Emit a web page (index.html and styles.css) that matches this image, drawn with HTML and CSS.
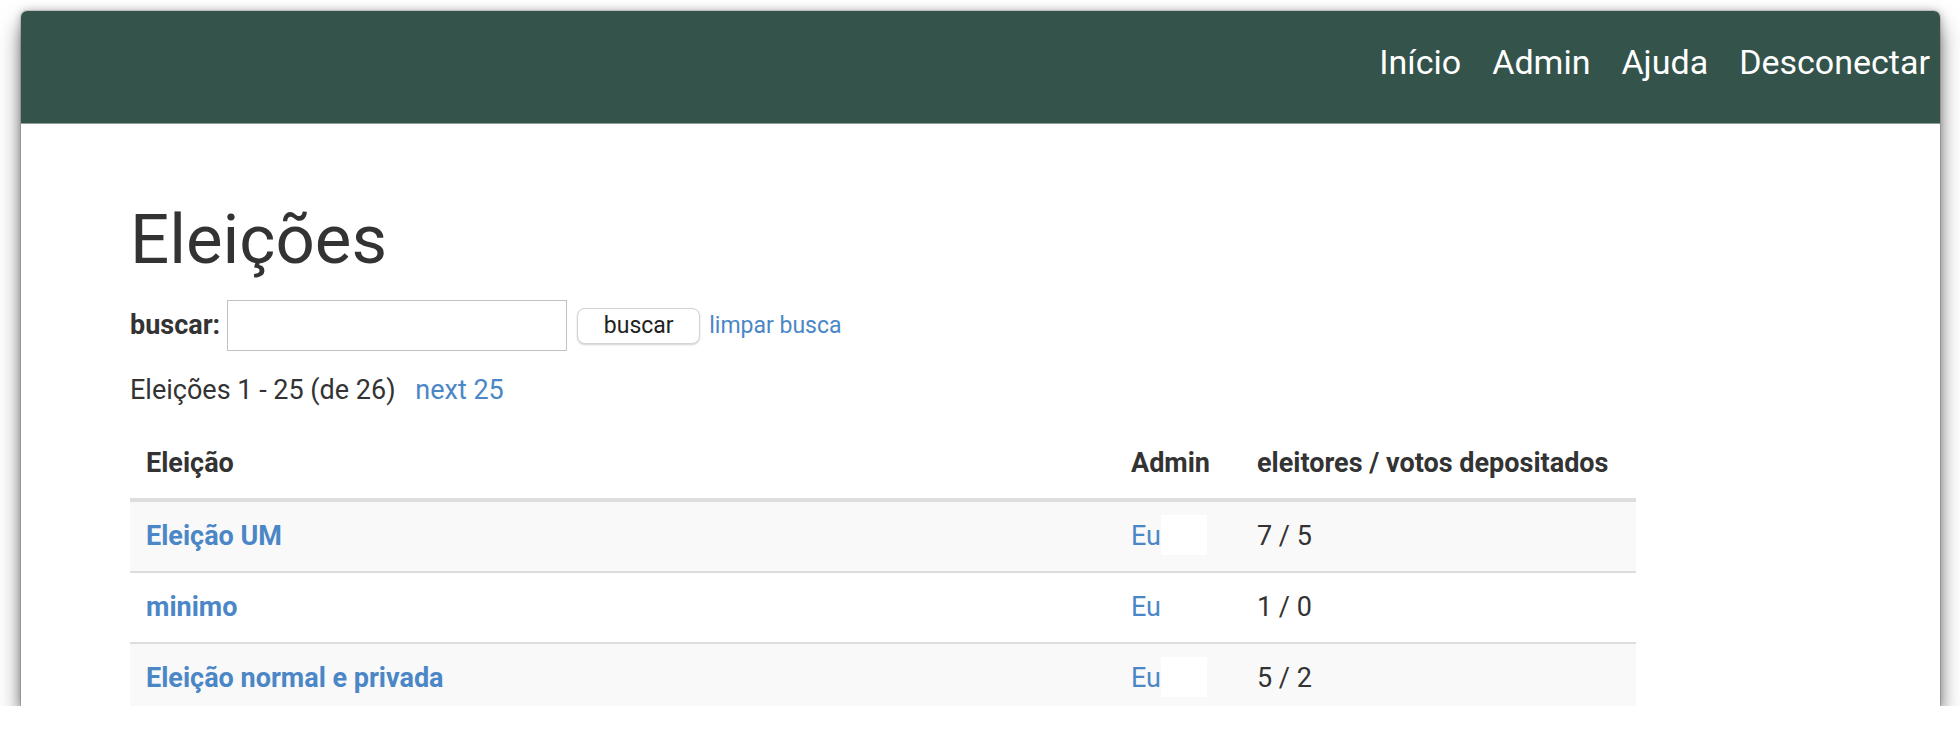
FILE: index.html
```html
<!DOCTYPE html>
<html lang="pt">
<head>
<meta charset="utf-8">
<title>Eleições</title>
<link rel="stylesheet" href="styles.css">
</head>
<body>
<div class="window">
  <nav class="navbar">
    <ul class="nav-links">
      <li><a href="#">Início</a></li>
      <li><a href="#">Admin</a></li>
      <li><a href="#">Ajuda</a></li>
      <li><a href="#">Desconectar</a></li>
    </ul>
  </nav>
  <main class="content">
    <h1 class="title">Eleições</h1>
    <form class="search">
      <label class="search-label" for="q">buscar:</label>
      <input class="search-input" id="q" type="text">
      <button class="search-btn" type="button">buscar</button>
      <a class="link small" href="#">limpar busca</a>
    </form>
    <p class="pager">Eleições 1 - 25 (de 26) <a class="link pager-next" href="#">next 25</a></p>
    <table class="elections">
      <thead>
        <tr>
          <th class="col-name">Eleição</th>
          <th class="col-admin">Admin</th>
          <th class="col-votes">eleitores / votos depositados</th>
        </tr>
      </thead>
      <tbody>
        <tr>
          <td><a class="link strong" href="#">Eleição UM</a></td>
          <td><a class="link" href="#">Eu</a><span class="blank"></span></td>
          <td>7 / 5</td>
        </tr>
        <tr>
          <td><a class="link strong" href="#">minimo</a></td>
          <td><a class="link" href="#">Eu</a><span class="blank"></span></td>
          <td>1 / 0</td>
        </tr>
        <tr>
          <td><a class="link strong" href="#">Eleição normal e privada</a></td>
          <td><a class="link" href="#">Eu</a><span class="blank"></span></td>
          <td>5 / 2</td>
        </tr>
      </tbody>
    </table>
  </main>
</div>
</body>
</html>
```

FILE: styles.css
```css
html, body {
  margin: 0;
  padding: 0;
  background: #ffffff;
  overflow: hidden;
}

body {
  font-family: Roboto, "Liberation Sans", Arial, sans-serif;
  font-size: 27px;
  line-height: 37px;
  color: #333333;
}

.window {
  margin: 11px 0 0 21px;
  width: 1919px;
  height: 695px;
  background: #ffffff;
  border-radius: 6px 6px 0 0;
  box-shadow: 0 14px 22px rgba(0, 0, 0, 0.5), 0 0 10px rgba(0, 0, 0, 0.28), 0 0 0 1px rgba(0, 0, 0, 0.12);
  overflow: hidden;
}

.navbar {
  height: 113px;
  box-sizing: border-box;
  background: #33534b;
  border-bottom: 1px solid #8e9d98;
  display: flex;
  justify-content: flex-end;
}

.nav-links {
  list-style: none;
  margin: 0;
  padding: 31px 10px 0 0;
  display: flex;
  gap: 31px;
  font-size: 34px;
  line-height: 40px;
}

.nav-links a {
  color: #ffffff;
  text-decoration: none;
}

.content {
  padding: 80px 0 0 109px;
}

.title {
  margin: 0;
  font-size: 69px;
  font-weight: 400;
  line-height: 72px;
  color: #333333;
}

.search {
  margin: 24px 0 0 0;
  height: 51px;
  display: flex;
  align-items: center;
}

.search-label {
  font-weight: 700;
  color: #333333;
  margin-right: 7px;
}

.search-input {
  box-sizing: border-box;
  width: 340px;
  height: 51px;
  margin: 0 10px 0 0;
  border: 1px solid #c2c2c2;
  background: #ffffff;
  font: inherit;
}

.search-btn {
  box-sizing: border-box;
  height: 36px;
  width: 123px;
  margin: 0 9px 0 0;
  padding: 0;
  border: 1px solid #d4d4d4;
  border-radius: 8px;
  background: #ffffff;
  box-shadow: 0 1px 2px rgba(0, 0, 0, 0.18);
  font-family: inherit;
  font-size: 23px;
  line-height: 34px;
  color: #222222;
}

.link {
  color: #4b87c6;
  text-decoration: none;
}

.small {
  font-size: 23px;
}

.strong {
  font-weight: 700;
}

.pager {
  margin: 21px 0 0 0;
}

.pager-next {
  margin-left: 13px;
}

.elections {
  margin-top: 20px;
  width: 1506px;
  border-collapse: collapse;
  border-spacing: 0;
}

.elections th,
.elections td {
  padding: 16px;
  text-align: left;
  vertical-align: top;
  white-space: nowrap;
}

.elections th {
  font-weight: 700;
  color: #333333;
  border-bottom: 4px solid #dddddd;
}

.elections td {
  border-top: 2px solid #dddddd;
}

.elections thead + tbody tr:first-child td {
  border-top: 0;
}

.elections tbody tr:nth-child(odd) td {
  background: #f9f9f9;
}

.col-name {
  width: 953px;
}

.col-admin {
  width: 94px;
}

.blank {
  display: inline-block;
  width: 46px;
  height: 40px;
  margin-top: -3px;
  vertical-align: -10px;
  background: #ffffff;
}
```
